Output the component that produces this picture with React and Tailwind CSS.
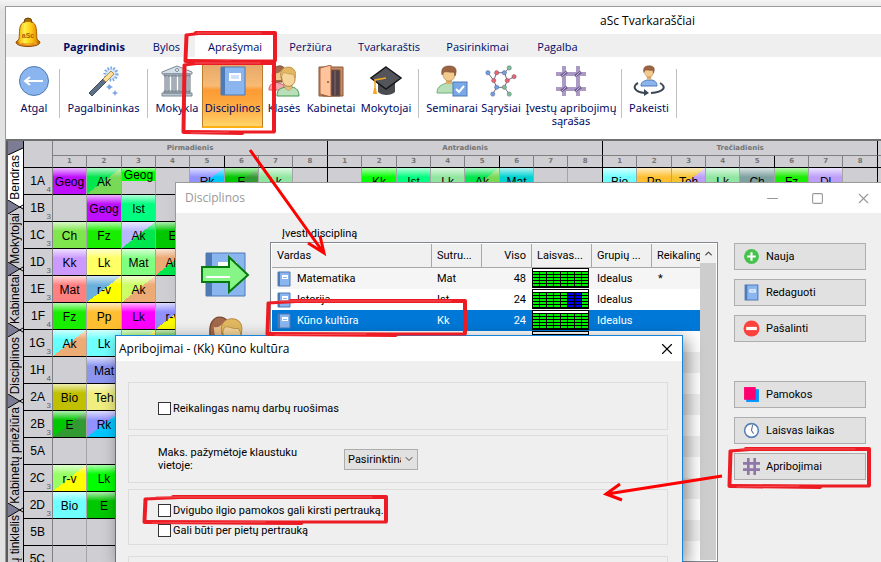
import clsx from 'clsx';
import { Minus, Square, X, ChevronDown, ChevronUp } from 'lucide-react';

const MENU = [
  { label: 'Pagrindinis', width: 'w-[88px]', bold: true },
  { label: 'Bylos', width: 'w-[57px]' },
  { label: 'Aprašymai', width: 'w-[80px]', active: true },
  { label: 'Peržiūra', width: 'w-[71px]' },
  { label: 'Tvarkaraštis', width: 'w-[86px]' },
  { label: 'Pasirinkimai', width: 'w-[91px]' },
  { label: 'Pagalba', width: 'w-[69px]' },
];

// Column widths of one day, 8 lessons
const LESSON_COLS = ['w-[34px]', 'w-[35px]', 'w-[34px]', 'w-[34px]', 'w-[35px]', 'w-[34px]', 'w-[34px]', 'w-[35px]'];
const DAYS = ['Pirmadienis', 'Antradienis', 'Trečiadienis'];

const FILLS = {
  purple: 'bg-[#bf0fff]',
  lime: 'bg-[#00ff00]',
  green: 'bg-[#1aee00]',
  dark: 'bg-[#00c800]',
  spring: 'bg-[#00ff80]',
  leaf: 'bg-[#80e64d]',
  mint: 'bg-[#90e6a0]',
  pale: 'bg-[#80ff80]',
  lilac: 'bg-[#cc99ff]',
  violet: 'bg-[#bd9ffa]',
  yellow: 'bg-[#ffff66]',
  salmon: 'bg-[#ff8080]',
  orange: 'bg-[#ffbf30]',
  magenta: 'bg-[#ff00ff]',
  cyan: 'bg-[#70ffff]',
  teal: 'bg-[#00d2d2]',
  slate: 'bg-[#7fa0a0]',
  blue: 'bg-[#8c96f0]',
  olive: 'bg-[#c0c000]',
  straw: 'bg-[#f0ee80]',
  moss: 'bg-[#55cc33]',
  greenLeaf: 'bg-[linear-gradient(to_bottom_right,#00e64d_50%,#77d955_50%)]',
  blueCyan: 'bg-[linear-gradient(to_bottom_right,#9191ff_50%,#00c8ff_50%)]',
  darkForest: 'bg-[linear-gradient(to_bottom_right,#00c800_50%,#339933_50%)]',
  goldViolet: 'bg-[linear-gradient(to_bottom_right,#f5c430_50%,#bd9ffa_50%)]',
  lavGreen: 'bg-[linear-gradient(to_bottom_right,#b8b8ff_50%,#00e64d_50%)]',
  tanGreen: 'bg-[linear-gradient(to_bottom_right,#ecaa75_50%,#00e64d_50%)]',
  skyYellow: 'bg-[linear-gradient(to_bottom_right,#6ab0dc_50%,#ffff00_50%)]',
  limeTan: 'bg-[linear-gradient(to_bottom_right,#ccff66_50%,#ecaa75_50%)]',
  blueYellow: 'bg-[linear-gradient(to_bottom_right,#9191ff_50%,#ffff00_50%)]',
  cyanTan: 'bg-[linear-gradient(to_bottom_right,#66ffff_50%,#ecaa75_50%)]',
  greenYellow: 'bg-[linear-gradient(to_bottom_right,#99ff66_50%,#ffff00_50%)]',
};

const ROWS = [
  {
    name: '1A', count: 4,
    cells: [
      ['Geog', 'purple'], ['Ak', 'greenLeaf'], ['Geog', 'lime', true], null, ['Rk', 'blueCyan'], ['E', 'darkForest'], ['Lk', 'mint'], null,
      null, ['Kk', 'lime'], ['Ist', 'spring'], ['Lk', 'mint'], ['Ak', 'greenLeaf'], ['Mat', 'teal'], null, null,
      ['Bio', 'cyan'], ['Pp', 'orange'], ['Teh', 'goldViolet'], ['Lk', 'mint'], ['Ch', 'slate'], ['Fz', 'green'], ['Dl', 'violet'], null,
    ],
  },
  { name: '1B', count: 3, cells: [null, ['Geog', 'purple'], ['Ist', 'spring']] },
  { name: '1C', count: 3, cells: [['Ch', 'leaf'], ['Fz', 'green'], ['Ak', 'lavGreen'], ['E', 'dark']] },
  { name: '1D', count: 3, cells: [['Kk', 'lilac'], ['Lk', 'yellow'], ['Mat', 'pale'], ['Ak', 'tanGreen']] },
  { name: '1E', count: 3, cells: [['Mat', 'salmon'], ['r-v', 'skyYellow'], ['Ak', 'limeTan']] },
  { name: '1F', count: 4, cells: [['Fz', 'green'], ['Pp', 'orange'], ['Lk', 'magenta'], ['r-v', 'blueYellow']] },
  { name: '1G', count: 3, cells: [['Ak', 'cyanTan'], ['Lk', 'cyan'], ['', 'greenYellow'], ['', 'moss']] },
  { name: '1H', count: 4, cells: [null, ['Mat', 'blue']] },
  { name: '2A', count: 3, cells: [['Bio', 'olive'], ['Teh', 'straw']] },
  { name: '2B', count: 3, cells: [['E', 'darkForest'], ['Rk', 'blueCyan']] },
  { name: '5A', cells: [] },
  { name: '2C', count: 3, cells: [['r-v', 'greenYellow'], ['Lk', 'lime']] },
  { name: '2D', count: 3, cells: [['Bio', 'cyan'], ['E', 'dark']] },
  { name: '5B', cells: [] },
  { name: '5C', cells: [] },
];

const SIDE_TABS = [
  { label: 'Bendras', height: 'h-[45px]', active: true },
  { label: 'Mokytojai', height: 'h-[48px]' },
  { label: 'Kabinetai', height: 'h-[47px]' },
  { label: 'Disciplinos', height: 'h-[57px]' },
  { label: 'Kabinetų priežiūra', height: 'h-[95px]' },
  { label: 'ų tinklelis', height: 'h-[45px]' },
];

const SUBJECTS = [
  { name: 'Matematika', short: 'Mat', total: 48, needed: '*', blocked: [] },
  { name: 'Istorija', short: 'Ist', total: 24, needed: '', blocked: [5, 6] },
  { name: 'Kūno kultūra', short: 'Kk', total: 24, needed: '', blocked: [], selected: true },
];

function BellLogo() {
  return (
    <svg width="28" height="32" viewBox="0 0 28 32" aria-hidden="true">
      <defs>
        <linearGradient id="bell" x1="0" x2="1">
          <stop offset="0" stopColor="#f0a000" />
          <stop offset="0.35" stopColor="#fff04a" />
          <stop offset="0.65" stopColor="#ffc810" />
          <stop offset="1" stopColor="#d97a00" />
        </linearGradient>
      </defs>
      <circle cx="14" cy="5" r="4" fill="#a87008" stroke="#6a3f07" />
      <path d="M2 25C2 31 26 31 26 25L22 22H6Z" fill="#e88a10" stroke="#8a4a08" />
      <path d="M5 22C6 16 4 6 11 5C13 4 15 4 17 5C24 6 22 16 23 22L25 25C22 28 6 28 3 25Z" fill="url(#bell)" stroke="#a86000" />
      <path d="M5 26C10 28 18 28 23 26" stroke="#ffb030" fill="none" />
      <text x="14" y="21" textAnchor="middle" fontSize="7" fontWeight="bold" fontFamily="Liberation Sans, sans-serif" fill="#a86000">aSc</text>
    </svg>
  );
}

function BackIcon() {
  return (
    <svg width="32" height="32" viewBox="0 0 32 32" aria-hidden="true">
      <circle cx="16" cy="16" r="14.500" fill="#8ab5ee" stroke="#4e7ab5" />
      <path d="M25 16H7M12 12L7 16L12 20" fill="none" stroke="#fff" strokeWidth="2" />
    </svg>
  );
}

function WandIcon() {
  return (
    <svg width="32" height="32" viewBox="0 0 32 32" aria-hidden="true">
      <circle cx="23" cy="9" r="6" fill="#d6e6fb" stroke="#7aa7df" strokeWidth="3" strokeDasharray="1.500 1.500" />
      <path d="M1 28L15 14L18 17L4 31Z" fill="#5f7186" stroke="#3f4e60" />
      <path d="M15 14L23 6L26 9L18 17Z" fill="#ffe09a" stroke="#b98c45" />
      <path d="M21 19L23 21L25 22L23 23L21 25L20 23L18 22L20 21Z M27 25L28 27L30 28L28 29L27 31L26 29L24 28L26 27Z" fill="#7aa7df" />
    </svg>
  );
}

function SchoolIcon() {
  return (
    <svg width="32" height="32" viewBox="0 0 32 32" aria-hidden="true">
      <path d="M1 7L16 1L31 7V9H1Z" fill="#d5dfe8" stroke="#7b8894" />
      <circle cx="16" cy="5" r="1.500" fill="#fff" stroke="#7b8894" />
      <path d="M3 9H29V11H3Z M3 26H29V28H3Z M1 28H31V31H1Z" fill="#b9c4ce" stroke="#7b8894" />
      {[4, 11, 18, 25].map(x => (
        <g key={x} fill="#e4ebf2" stroke="#66727e">
          <rect x={x} y="11" width="4" height="15" />
          <path d={`M${x + 2} 12V25`} />
        </g>
      ))}
    </svg>
  );
}

function BookIcon({ size = 16, large }) {
  return (
    <svg width={size} height={size} viewBox="0 0 16 16" aria-hidden="true">
      <path d="M2 1H14V15H2Z" fill="#8ab5ee" stroke="#4e7ab5" strokeWidth={large ? '.5' : '1'} />
      <path d="M2 1H4V15H2Z" fill="#4e7ab5" />
      <path d="M6 4H12V8H6Z" fill="#fff" />
      {large ? (
        <path d="M7 5.500H11M7 6.500H11" stroke="#8ab5ee" strokeWidth=".4" />
      ) : (
        <path d="M7 6.500H11" stroke="#8ab5ee" />
      )}
    </svg>
  );
}

function PairIcon({ size = 32 }) {
  return (
    <svg width={size} height={size} viewBox="0 0 32 32" aria-hidden="true">
      <path d="M1 25C1 19 5 18 8 17L16 20V25Z" fill="#f4a6aa" stroke="#d65d67" />
      <path d="M4 17C5 13 3 8 6 4C9 -1 18 0 17 7L14 17Z" fill="#a3694d" stroke="#79482f" />
      <path d="M7 8C10 9 12 7 13 6V15H8Z" fill="#efc48e" />
      <path d="M9 31C9 24 13 23 18 22H24C29 23 31 26 31 31Z" fill="#b9dfba" stroke="#3f9a4c" />
      <path d="M17 18H24V23C22 26 19 26 17 23Z" fill="#e7bd7c" stroke="#b08442" strokeWidth=".5" />
      <path d="M13 9C14 1 25 0 27 7V15C26 23 16 24 14 15Z" fill="#f6d59a" stroke="#b08442" />
      <path d="M13 13C11 5 16 2 20 2C26 2 29 7 27 13L25 9C21 10 18 7 15 8Z" fill="#e2b860" stroke="#b08442" strokeWidth=".5" />
    </svg>
  );
}

function DoorIcon() {
  return (
    <svg width="32" height="32" viewBox="0 0 32 32" aria-hidden="true">
      <path d="M4 2H28V31H4Z" fill="#c78c66" stroke="#875436" />
      <path d="M8 5H25V31H8Z" fill="#514046" stroke="#875436" />
      <path d="M20 6V30" stroke="#6d565b" strokeWidth="2" />
      <path d="M5 3L16 0V32L5 29Z" fill="#ffc49b" stroke="#a36542" />
      <circle cx="13" cy="17" r="1" fill="#875436" />
    </svg>
  );
}

function CapIcon() {
  return (
    <svg width="32" height="32" viewBox="0 0 32 32" aria-hidden="true">
      <path d="M8 16H25V27C21 31 12 31 8 27Z" fill="#4a4b4f" />
      <path d="M16 2L31 13L16 24L1 13Z" fill="#53555a" stroke="#17181c" strokeWidth="1.500" />
      <path d="M16 13L5 15V24" fill="none" stroke="#f5a623" strokeWidth="1.500" />
      <path d="M4 23H6L7 29H3Z" fill="#f5a623" />
    </svg>
  );
}

function PersonHead({ x = 0, y = 0 }) {
  return (
    <g transform={`translate(${x} ${y})`}>
      <path d="M5 12H11V18H5Z" fill="#e0ae68" />
      <path d="M2 5C3 0 13 0 14 5V9C13 17 3 17 2 9Z" fill="#f2ca8b" stroke="#9b6b3f" strokeWidth=".5" />
      <path d="M1 9C-1 -1 7 0 10 0C16 1 16 5 14 10L13 6C9 7 6 5 3 6Z" fill="#9b6340" stroke="#704125" strokeWidth=".5" />
    </g>
  );
}

function SeminarIcon() {
  return (
    <svg width="32" height="32" viewBox="0 0 32 32" aria-hidden="true">
      <path d="M1 28C1 21 6 20 10 18H16C20 19 24 22 24 28Z" fill="#b9dfba" stroke="#6fae79" />
      <PersonHead x={5} y={1} />
      <rect x="17" y="17" width="14" height="14" fill="#78a8e8" stroke="#4e7ab5" />
      <path d="M20 24L23 27L28 21" fill="none" stroke="#fff" strokeWidth="2" />
    </svg>
  );
}

function RelationsIcon() {
  const nodes = [
    [12, 8, '#f0636b'], [20, 8, '#6d9fe8'], [9, 16, '#f0636b'], [23, 16, '#f0636b'], [12, 23, '#6d9fe8'], [20, 23, '#7ec395'],
    [3, 8, '#6d9fe8'], [25, 3, '#7ec395'], [30, 12, '#f0636b'], [8, 30, '#6d9fe8'], [25, 30, '#7ec395'],
  ];
  return (
    <svg width="32" height="32" viewBox="0 0 33 33" aria-hidden="true">
      <path d="M12 8H20L23 16L20 23H12L9 16Z M3 8L9 16M20 8L25 3M23 16L30 12M12 23L8 30M20 23L25 30" fill="none" stroke="#7c5d73" />
      {nodes.map(([x, y, color]) => (
        <circle key={`${x}-${y}`} cx={x} cy={y} r="2.200" fill={color} stroke="#54607a" strokeWidth=".5" />
      ))}
    </svg>
  );
}

function FenceIcon() {
  return (
    <svg width="32" height="32" viewBox="0 0 32 32" aria-hidden="true">
      <path d="M9 1V31M23 1V31M1 9H31M1 24H31" stroke="#ab9bc4" strokeWidth="4" />
      <path d="M6 11L12 7M20 11L26 7M6 26L12 22M20 26L26 22" stroke="#735f94" strokeWidth="3" />
      <path d="M7 11L11 7M21 11L25 7M7 26L11 22M21 26L25 22" stroke="#c0b3d5" />
    </svg>
  );
}

function SwitchIcon() {
  return (
    <svg width="32" height="32" viewBox="0 0 32 32" aria-hidden="true">
      <path d="M8 21C8 16 12 16 14 15H19C22 16 24 17 24 21Z" fill="#8ab5ee" stroke="#4e7ab5" />
      <g transform="translate(4 0) scale(.75)">
        <PersonHead x={8} y={1} />
      </g>
      <path d="M5 18C-1 21 1 27 12 28M18 28C31 27 34 22 27 18" fill="none" stroke="#3a4652" strokeWidth="2" />
      <path d="M11 24L16 28L11 31Z" fill="#3a4652" />
    </svg>
  );
}

function ImportIcon() {
  return (
    <svg width="50" height="46" viewBox="0 0 50 46" aria-hidden="true">
      <path d="M5 1H44V44H5Z" fill="#8ab5ee" stroke="#4e7ab5" />
      <path d="M5 1H11V44H5Z" fill="#4e7ab5" />
      <path d="M17 10H36V19H17Z" fill="#fff" />
      <path d="M1 15H28V5L47 23L28 40V30H1Z" fill="#86f586" stroke="#067a10" strokeWidth="2" />
      <path d="M5 25H29" stroke="#fff" strokeWidth="2" />
    </svg>
  );
}

const RIBBON = [
  { label: 'Atgal', width: 'w-[50px]', icon: <BackIcon /> },
  { sep: 'mr-0' },
  { label: 'Pagalbininkas', width: 'w-[87px]', icon: <WandIcon /> },
  { sep: 'mr-1' },
  { label: 'Mokykla', width: 'w-[50px]', icon: <SchoolIcon /> },
  { label: 'Disciplinos', width: 'w-[61px]', icon: <BookIcon size={32} large />, active: true },
  { label: 'Klasės', width: 'w-[42px]', icon: <PairIcon /> },
  { label: 'Kabinetai', width: 'w-[52px]', icon: <DoorIcon /> },
  { label: 'Mokytojai', width: 'w-[58px]', icon: <CapIcon /> },
  { sep: 'ml-[3px] mr-[5px]' },
  { label: 'Seminarai', width: 'w-[56px]', icon: <SeminarIcon /> },
  { label: 'Sąryšiai', width: 'w-[42px]', icon: <RelationsIcon /> },
  { label: 'Įvestų apribojimų sąrašas', width: 'w-[98px]', icon: <FenceIcon />, wrap: true },
  { sep: 'ml-px mr-0' },
  { label: 'Pakeisti', width: 'w-[54px]', icon: <SwitchIcon /> },
  { sep: 'mr-0' },
];

function Ribbon() {
  return (
    <div className="flex h-[82px] items-start bg-white pl-[3px] pt-[7px] text-[#000a64]">
      {RIBBON.map((item, idx) =>
        item.sep ? (
          <div key={idx} className={clsx('mt-[5px] h-[49px] w-px shrink-0 bg-[#c0c0c0]', item.sep)} />
        ) : (
          <button
            key={item.label}
            className={clsx(
              'flex h-[64px] shrink-0 flex-col items-center gap-[4px] pt-px text-[11px] leading-[13px]',
              item.width,
              item.wrap ? 'whitespace-normal' : 'whitespace-nowrap',
              item.active && 'border-x border-b-2 border-x-[#b97d2c] border-b-[#ffb010] bg-[linear-gradient(#e6a868_0%,#f8bb75_35%,#fd9a33_42%,#ffb14a_75%,#ffd56a_100%)]'
            )}
          >
            <span className="shrink-0">{item.icon}</span>
            {item.label}
          </button>
        )
      )}
    </div>
  );
}

function SideTabs() {
  return (
    <nav className="flex w-[18px] shrink-0 flex-col overflow-hidden border-l-2 border-r border-l-[#5a5a5a] border-r-black bg-[#cdccd1] font-['Liberation_Sans',sans-serif]">
      {SIDE_TABS.map((tab, idx) => (
        <div key={tab.label} className="flex shrink-0 flex-col">
          <svg width="15" height="14" viewBox="0 0 15 14" aria-hidden="true">
            <rect width="15" height="7" fill={idx === 0 ? '#7c7c94' : idx === 1 ? '#fff' : '#cdccd1'} />
            <path d="M0 7H15V14H0Z" fill={tab.active ? '#fff' : '#cdccd1'} />
            <path d={idx === 0 ? 'M0 0H15V7L0 14Z' : 'M0 0L11 7L0 14Z'} fill="#7c7c94" />
            <path d={idx === 0 ? 'M0 14L15 7' : 'M0 0L15 9M0 14L15 5'} stroke="#000" fill="none" />
          </svg>
          <button
            className={clsx(
              'flex w-[15px] items-center justify-center whitespace-nowrap text-[12px] leading-[15px]',
              tab.height,
              tab.active && 'bg-white'
            )}
          >
            <span className="rotate-180 [writing-mode:vertical-rl]">{tab.label}</span>
          </button>
        </div>
      ))}
    </nav>
  );
}

function Timetable() {
  return (
    <table className="w-[889px] shrink-0 table-fixed border-separate border-spacing-0 bg-[#cfced3] text-center font-['Liberation_Sans',sans-serif]">
      <colgroup>
        <col className="w-[29px]" />
        {[0, 1, 2].map(day => LESSON_COLS.map((width, i) => <col key={`${day}-${i}`} className={width} />))}
        <col className="w-[35px]" />
      </colgroup>
      <thead className="font-['DejaVu_Sans',sans-serif] text-[#747474]">
        <tr>
          <th rowSpan={2} className="border-b border-r border-b-black border-r-[#808080] p-0" />
          {DAYS.map(day => (
            <th key={day} colSpan={8} className="h-[15px] border-b border-r border-b-[#808080] border-r-black p-0 text-[7px] leading-[14px]">
              {day}
            </th>
          ))}
          <th className="border-b border-[#808080] p-0" />
        </tr>
        <tr>
          {DAYS.map(day =>
            LESSON_COLS.map((_, i) => (
              <th
                key={`${day}-${i}`}
                className={clsx(
                  'h-[12px] border-b border-r border-b-black p-0 text-[7px] leading-[11px]',
                  i === 7 || i === 4 ? 'border-r-black' : 'border-r-[#808080]'
                )}
              >
                {i + 1}
              </th>
            ))
          )}
          <th className="border-b border-black p-0" />
        </tr>
      </thead>
      <tbody>
        {ROWS.map(row => (
          <tr key={row.name}>
            <th className="border-b border-r border-b-black border-r-[#808080] p-0 font-normal">
              <div className="flex h-[26px] items-center justify-end">
                <span className="text-[12px]">{row.name}</span>
                <span className="w-[7px] self-end pr-px text-right text-[8px] leading-[9px] text-[#606060]">{row.count}</span>
              </div>
            </th>
            {Array.from({ length: 25 }, (_, i) => {
              const cell = row.cells[i];
              const half = cell && cell[2];
              return (
                <td
                  key={i}
                  className={clsx('border-b border-r border-b-black p-0 align-top', i % 8 === 7 ? 'border-r-black' : 'border-r-[#a5a5a8]')}
                >
                  {cell && (
                    <div className={clsx(half ? 'h-[13px]' : 'h-[26px]', FILLS[cell[1]])}>
                      <div
                        className={clsx(
                          'h-full bg-linear-to-b from-white/70 to-transparent to-35% text-[12px]',
                          half ? 'leading-[15px]' : 'leading-[29px]'
                        )}
                      >
                        {cell[0]}
                      </div>
                    </div>
                  )}
                </td>
              );
            })}
          </tr>
        ))}
      </tbody>
    </table>
  );
}

function FreeTime({ blocked }) {
  return (
    <div className="flex h-[20px] w-[57px] flex-col gap-px border border-black bg-black">
      <div className="h-[2px] bg-white" />
      <div className="grid grid-cols-8 gap-px">
        {Array.from({ length: 40 }, (_, i) => (
          <div key={i} className={clsx('h-[2px]', blocked.includes(i % 8) ? 'bg-[#0000ee]' : 'bg-[#00f000]')} />
        ))}
      </div>
    </div>
  );
}

function SubjectList() {
  const head = 'h-[24px] overflow-hidden whitespace-nowrap border-b border-r border-[#a8a8a8] bg-[#f0f0f0] p-0 px-[5px] text-left font-normal';
  return (
    <div className="flex min-w-0 flex-1 overflow-hidden border border-[#828790] bg-white p-px">
      <div className="min-w-0 flex-1 overflow-hidden">
        <table className="w-full table-fixed border-separate border-spacing-0">
          <thead>
            <tr>
              <th className={clsx(head, 'w-[160px]')}>Vardas</th>
              <th className={clsx(head, 'w-[50px]')}>Sutru...</th>
              <th className={clsx(head, 'w-[50px] text-right')}>Viso</th>
              <th className={clsx(head, 'w-[60px]')}>Laisvas...</th>
              <th className={clsx(head, 'w-[60px]')}>Grupių ...</th>
              <th className="overflow-hidden border-b border-[#a8a8a8] bg-[#f0f0f0] p-0 pl-[5px] text-left font-normal">Reikaling</th>
            </tr>
          </thead>
          <tbody>
            {SUBJECTS.map((s, idx) => (
              <tr key={s.name} className={clsx(s.selected ? 'bg-[#0078d7] text-white' : idx % 2 === 0 && 'bg-[#f5f5f5]')}>
                <td className="h-[21px] p-0">
                  <div className="flex items-center gap-[5px] pl-1">
                    <BookIcon />
                    {s.name}
                  </div>
                </td>
                <td className="p-0 pl-[5px]">{s.short}</td>
                <td className="p-0 pr-[6px] text-right">{s.total}</td>
                <td className="p-0 align-top"><FreeTime blocked={s.blocked} /></td>
                <td className="p-0 pl-[5px]">Idealus</td>
                <td className="p-0 pl-[6px]">{s.needed}</td>
              </tr>
            ))}
            {Array.from({ length: 11 }, (_, i) => (
              <tr key={i} className={clsx(i % 2 === 1 && 'bg-[#efefef]')}>
                <td colSpan={3} className="h-[21px] p-0" />
                <td colSpan={3} className="p-0 align-top">{i === 0 && <FreeTime blocked={[]} />}</td>
              </tr>
            ))}
          </tbody>
        </table>
      </div>
      <div className="flex w-[16px] shrink-0 flex-col items-center bg-[#f0f0f0]">
        <ChevronUp size={11} strokeWidth={3} className="my-[4px] text-[#505050]" />
        <div className="w-full flex-1 bg-[#cdcdcd]" />
      </div>
    </div>
  );
}

function SideButton({ icon, children }) {
  return (
    <button className="flex h-[27px] w-full items-center gap-[6px] border border-[#adadad] bg-[#e1e1e1] pl-2 text-left">
      <svg width="17" height="17" viewBox="0 0 16 16" aria-hidden="true">{icon}</svg>
      {children}
    </button>
  );
}

function SubjectsDialog() {
  return (
    <section className="absolute bottom-0 left-[175px] right-0 top-[182px] flex flex-col border-l border-t border-[#9a9a9a] bg-[#efefef] font-['Roboto',sans-serif] text-[11px] leading-[14px] shadow-lg">
      <header className="flex h-[30px] shrink-0 items-center bg-white pl-[9px] pr-[9px] font-['Open_Sans',sans-serif] text-[12px] text-[#999999]">
        <h2 className="flex-1">Disciplinos</h2>
        <button aria-label="Sumažinti"><Minus size={17} strokeWidth={1.5} /></button>
        <button aria-label="Padidinti" className="ml-[30px]"><Square size={13} strokeWidth={2} /></button>
        <button aria-label="Uždaryti" className="ml-[31px]"><X size={17} strokeWidth={1.5} /></button>
      </header>
      <div className="flex min-h-0 flex-1 pr-[15px]">
        <div className="flex w-[94px] shrink-0 flex-col items-center gap-[18px] pl-[6px] pt-[39px]">
          <ImportIcon />
          <PairIcon size={44} />
        </div>
        <div className="flex min-w-0 flex-1 flex-col pt-[14px]">
          <h3 className="mb-px pl-3">Įvesti discipliną</h3>
          <SubjectList />
        </div>
        <div className="ml-4 flex w-[132px] shrink-0 flex-col gap-[9px] pt-[30px]">
          <SideButton icon={<><circle cx="8" cy="8" r="7" fill="#46c34c" /><path d="M8 4V12M4 8H12" stroke="#fff" strokeWidth="2" /></>}>Nauja</SideButton>
          <SideButton icon={<><path d="M2 1H14V15H2Z" fill="#8ab5ee" stroke="#4e7ab5" /><path d="M2 1H4V15H2Z" fill="#4e7ab5" /><path d="M6 5H12V8H6Z" fill="#fff" /><path d="M7 6.500H11" stroke="#8ab5ee" /></>}>Redaguoti</SideButton>
          <SideButton icon={<><circle cx="8" cy="8" r="7.500" fill="#fb423c" /><path d="M3 8H13" stroke="#fff" strokeWidth="3" /></>}>Pašalinti</SideButton>
          <div className="h-[21px]" />
          <SideButton icon={<><path d="M3 3H15V15H3Z" fill="#0096ff" /><path d="M1 1H12V13H1Z" fill="#ff0070" /></>}>Pamokos</SideButton>
          <SideButton icon={<><circle cx="8" cy="8" r="6.500" fill="#fff" stroke="#5a80b8" strokeWidth="1.500" /><path d="M9 3L8 8L10 11" fill="none" stroke="#5a6f90" /></>}>Laisvas laikas</SideButton>
          <SideButton icon={<path d="M5 0V16M11 0V16M0 5H16M0 11H16" stroke="#8f78a8" strokeWidth="2.500" />}>Apribojimai</SideButton>
        </div>
      </div>
    </section>
  );
}

function CheckRow({ children }) {
  return (
    <label className="flex items-center gap-[2px]">
      <input type="checkbox" className="h-[13px] w-[13px] appearance-none border border-[#333333] bg-white checked:bg-[#0078d7]" />
      {children}
    </label>
  );
}

function ConstraintsDialog() {
  const group = 'mr-[14px] ml-3 shrink-0 border border-[#dcdcdc] pl-[29px]';
  return (
    <section className="absolute bottom-0 left-[115px] top-[335px] flex w-[568px] flex-col overflow-hidden border border-b-0 border-[#1883d7] bg-[#efefef] font-['Roboto',sans-serif] text-[11px] leading-[13px] shadow-[4px_4px_16px_rgba(0,0,0,0.45)]">
      <header className="flex h-[25px] shrink-0 items-center bg-white pl-[3px] pr-[6px] font-['Open_Sans',sans-serif] text-[12px]">
        <h2 className="flex-1">Apribojimai - (Kk) Kūno kultūra</h2>
        <button aria-label="Uždaryti"><X size={18} strokeWidth={1.5} /></button>
      </header>
      <div className={clsx(group, 'mt-[21px] flex h-[48px] items-center pt-1')}>
        <CheckRow>Reikalingas namų darbų ruošimas</CheckRow>
      </div>
      <div className={clsx(group, 'mt-[5px] flex h-[48px] items-center')}>
        <label htmlFor="max-marked" className="w-[186px] pr-8">Maks. pažymėtoje klaustuku vietoje:</label>
        <div className="grid items-center">
          <select id="max-marked" className="col-start-1 row-start-1 h-[21px] w-[74px] appearance-none overflow-hidden border border-[#adadad] bg-[#e1e1e1] pl-[3px] pr-[16px]">
            <option>Pasirinktina</option>
          </select>
          <ChevronDown size={12} className="pointer-events-none col-start-1 row-start-1 mr-[3px] justify-self-end text-[#404040]" />
        </div>
      </div>
      <div className={clsx(group, 'mt-[6px] flex h-[56px] flex-col gap-[7px] pt-[14px]')}>
        <CheckRow>Dvigubo ilgio pamokos gali kirsti pertrauką.</CheckRow>
        <CheckRow>Gali būti per pietų pertrauką</CheckRow>
      </div>
      <div className={clsx(group, 'mt-[11px] h-[48px]')} />
    </section>
  );
}

// Hand-drawn marker frame with uneven edges
function Marker({ x, y, w, h }) {
  const r = x + w;
  const b = y + h;
  return (
    <g fill="none" stroke="#ed1c24" strokeLinecap="round" strokeLinejoin="round">
      <path d={`M${x + 1} ${y + 2}L${x + w * 0.2} ${y}H${r}V${b}H${x}Z`} strokeWidth="3" />
      <path d={`M${x + w * 0.12} ${y}H${r}V${y + h * 0.4}`} strokeWidth="4" />
      <path d={`M${r} ${y + h * 0.4}V${b - 1}M${x + 1} ${b}L${x + w * 0.65} ${b + 1}`} strokeWidth="4" />
      <path d={`M${x + 2} ${y + 3}L${x + 1} ${b - 2}`} strokeWidth="3" />
      <path d={`M${x + 8} ${b + 1}L${x + w * 0.5} ${b}M${x + 12} ${y}H${r - 14}`} stroke="#f4545a" strokeWidth="1" />
    </g>
  );
}

function Annotations() {
  return (
    <svg className="pointer-events-none absolute left-0 top-0" width="881" height="562" viewBox="0 0 881 562" aria-hidden="true">
      <Marker x={185} y={33} w={90} h={28} />
      <Marker x={183} y={63} w={91} h={69} />
      <Marker x={267} y={301} w={198} h={33} />
      <Marker x={144} y={497} w={242} h={25} />
      <Marker x={729} y={449} w={140} h={37} />
      <g fill="none" stroke="#ff0000" strokeWidth="3">
        <path d="M250 150L323 252M308 243L324 253L320 236" />
        <path d="M722 476L607 494M620 484L606 494L622 500" />
      </g>
    </svg>
  );
}

export default function App() {
  return (
    <div className="relative flex h-screen flex-col overflow-hidden bg-linear-to-b from-[#f4f4f4] to-[#e2e2e2] to-2% pl-[5px] pt-[6px] font-['Noto_Sans',sans-serif] text-black">
      <main className="flex min-h-0 flex-1 flex-col border-l border-t border-[#9a9a9a] bg-white">
        <header className="shrink-0">
          <div className="flex h-[27px] items-center pl-[594px] font-['Open_Sans',sans-serif] text-[12px]">
            <h1 className="whitespace-nowrap">aSc Tvarkaraščiai</h1>
          </div>
          <nav className="flex h-[23px] bg-[#efefef] pl-[44px] font-['Open_Sans',sans-serif] text-[11px] text-[#000a64]">
            {MENU.map(item => (
              <button
                key={item.label}
                className={clsx('h-full shrink-0 text-center leading-[25px]', item.width, item.bold && 'font-bold', item.active && 'bg-white')}
              >
                {item.label}
              </button>
            ))}
          </nav>
          <div className="absolute left-[14px] top-[17px]"><BellLogo /></div>
          <Ribbon />
        </header>
        <div className="flex min-h-0 flex-1 overflow-hidden border-t-2 border-[#707070]">
          <SideTabs />
          <Timetable />
        </div>
      </main>
      <SubjectsDialog />
      <ConstraintsDialog />
      <Annotations />
    </div>
  );
}
